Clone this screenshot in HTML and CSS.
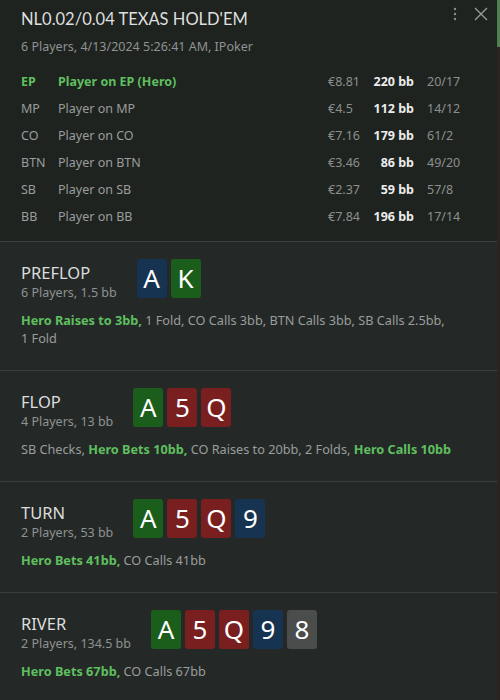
FILE: index.html
```html
<!DOCTYPE html>
<html>
<head>
<meta charset="utf-8">
<link rel="stylesheet" href="styles.css">
</head>
<body>
<div class="panel">
  <header class="hand-head">
    <div class="head-top">
      <div class="title">NL0.02/0.04 TEXAS HOLD'EM</div>
      <div class="head-icons">
        <svg class="dots" width="4" height="14" viewBox="0 0 4 14"><circle cx="2" cy="2" r="1.2" fill="#8a8f8c"/><circle cx="2" cy="7" r="1.2" fill="#8a8f8c"/><circle cx="2" cy="12" r="1.2" fill="#8a8f8c"/></svg>
        <svg class="close" width="14" height="14" viewBox="0 0 14 14"><path d="M1 1 L13 13 M13 1 L1 13" stroke="#9a9e9c" stroke-width="1.3" fill="none"/></svg>
      </div>
    </div>
    <div class="meta">6 Players, 4/13/2024 5:26:41 AM, IPoker</div>
    <div class="players">
      <div class="prow hero"><span class="pos">EP</span><span class="name">Player on EP (Hero)</span><span class="amt">€8.81</span><span class="bb">220 bb</span><span class="stat">20/17</span></div>
      <div class="prow"><span class="pos">MP</span><span class="name">Player on MP</span><span class="amt">€4.5</span><span class="bb">112 bb</span><span class="stat">14/12</span></div>
      <div class="prow"><span class="pos">CO</span><span class="name">Player on CO</span><span class="amt">€7.16</span><span class="bb">179 bb</span><span class="stat">61/2</span></div>
      <div class="prow"><span class="pos">BTN</span><span class="name">Player on BTN</span><span class="amt">€3.46</span><span class="bb">86 bb</span><span class="stat">49/20</span></div>
      <div class="prow"><span class="pos">SB</span><span class="name">Player on SB</span><span class="amt">€2.37</span><span class="bb">59 bb</span><span class="stat">57/8</span></div>
      <div class="prow"><span class="pos">BB</span><span class="name">Player on BB</span><span class="amt">€7.84</span><span class="bb">196 bb</span><span class="stat">17/14</span></div>
    </div>
  </header>

  <section class="street">
    <div class="street-head">
      <div class="street-info">
        <div class="street-name">PREFLOP</div>
        <div class="street-sub">6 Players, 1.5 bb</div>
      </div>
      <div class="cards">
        <span class="card blue">A</span><span class="card green">K</span>
      </div>
    </div>
    <p class="actions"><b>Hero Raises to 3bb,</b> 1 Fold, CO Calls 3bb, BTN Calls 3bb, SB Calls 2.5bb, <span class="nw">1 Fold</span></p>
  </section>

  <section class="street">
    <div class="street-head">
      <div class="street-info">
        <div class="street-name">FLOP</div>
        <div class="street-sub">4 Players, 13 bb</div>
      </div>
      <div class="cards">
        <span class="card green">A</span><span class="card red">5</span><span class="card red">Q</span>
      </div>
    </div>
    <p class="actions">SB Checks, <b>Hero Bets 10bb,</b> CO Raises to 20bb, 2 Folds, <b>Hero Calls 10bb</b></p>
  </section>

  <section class="street">
    <div class="street-head">
      <div class="street-info">
        <div class="street-name">TURN</div>
        <div class="street-sub">2 Players, 53 bb</div>
      </div>
      <div class="cards">
        <span class="card green">A</span><span class="card red">5</span><span class="card red">Q</span><span class="card blue">9</span>
      </div>
    </div>
    <p class="actions"><b>Hero Bets 41bb,</b> CO Calls 41bb</p>
  </section>

  <section class="street">
    <div class="street-head">
      <div class="street-info">
        <div class="street-name">RIVER</div>
        <div class="street-sub">2 Players, 134.5 bb</div>
      </div>
      <div class="cards">
        <span class="card green">A</span><span class="card red">5</span><span class="card red">Q</span><span class="card blue">9</span><span class="card gray">8</span>
      </div>
    </div>
    <p class="actions"><b>Hero Bets 67bb,</b> CO Calls 67bb</p>
  </section>

  <div class="scrollbar"><div class="thumb"></div></div>
</div>
</body>
</html>
```

FILE: styles.css
```css
html, body {
  margin: 0;
  padding: 0;
  background: #242928;
}
body {
  font-family: "Noto Sans", "Open Sans", sans-serif;
  color: #9a9d9b;
  width: 500px;
  height: 700px;
  overflow: hidden;
}
.panel {
  width: 497px;
  position: relative;
}
.hand-head {
  background: #1e2320;
  padding: 7px 20px 11px 21px;
}
.head-top {
  display: flex;
  justify-content: space-between;
  align-items: flex-start;
  margin-right: -11px;
}
.title {
  font-family: "Lato", "Noto Sans", sans-serif;
  font-size: 16.5px;
  line-height: 24px;
  color: #dedfde;
}
.head-icons {
  display: flex;
  align-items: center;
  gap: 17px;
  padding-top: 0;
}
.meta {
  margin-top: 7px;
  font-size: 12.5px;
  line-height: 18px;
  color: #8f9290;
}
.players {
  margin-top: 12px;
}
.prow {
  display: grid;
  grid-template-columns: 37px 1fr 44px 42px 63px;
  height: 27px;
  align-items: center;
  font-size: 12.5px;
  color: #9a9d9b;
}
.prow .amt {
  color: #8c8f8d;
}
.prow .bb {
  text-align: right;
  font-weight: 700;
  color: #ececec;
}
.prow .stat {
  padding-left: 13px;
  color: #8c8f8d;
}
.prow.hero .pos,
.prow.hero .name {
  color: #5fbf5f;
  font-weight: 700;
}
.street {
  border-top: 1px solid #3b403f;
  padding: 17px 20px 23px 21px;
}
.street-head {
  display: flex;
  align-items: flex-start;
  gap: 20px;
}
.street-info {
  padding-top: 3px;
}
.street-name {
  font-size: 16.5px;
  line-height: 22px;
  color: #dcdddc;
}
.street-sub {
  font-size: 12.5px;
  line-height: 18px;
  color: #8f9290;
}
.cards {
  display: flex;
  gap: 4px;
}
.card {
  width: 30px;
  height: 39px;
  border-radius: 3px;
  color: #ffffff;
  font-size: 26px;
  line-height: 39px;
  text-align: center;
}
.card.blue { background: #163451; }
.card.green { background: #1b5e1b; }
.card.red { background: #7a1f1f; }
.card.gray { background: #4b4c4c; }
.actions {
  margin: 9px 0 0;
  font-size: 12.7px;
  line-height: 18px;
  color: #9a9d9b;
}
.actions b {
  color: #5fbf5f;
  font-weight: 700;
}
.nw {
  white-space: nowrap;
}
.scrollbar {
  position: fixed;
  top: 0;
  right: 0;
  width: 3px;
  height: 700px;
  background: #2a2322;
}
.thumb {
  height: 47px;
  background: #4f7f4f;
}
```
